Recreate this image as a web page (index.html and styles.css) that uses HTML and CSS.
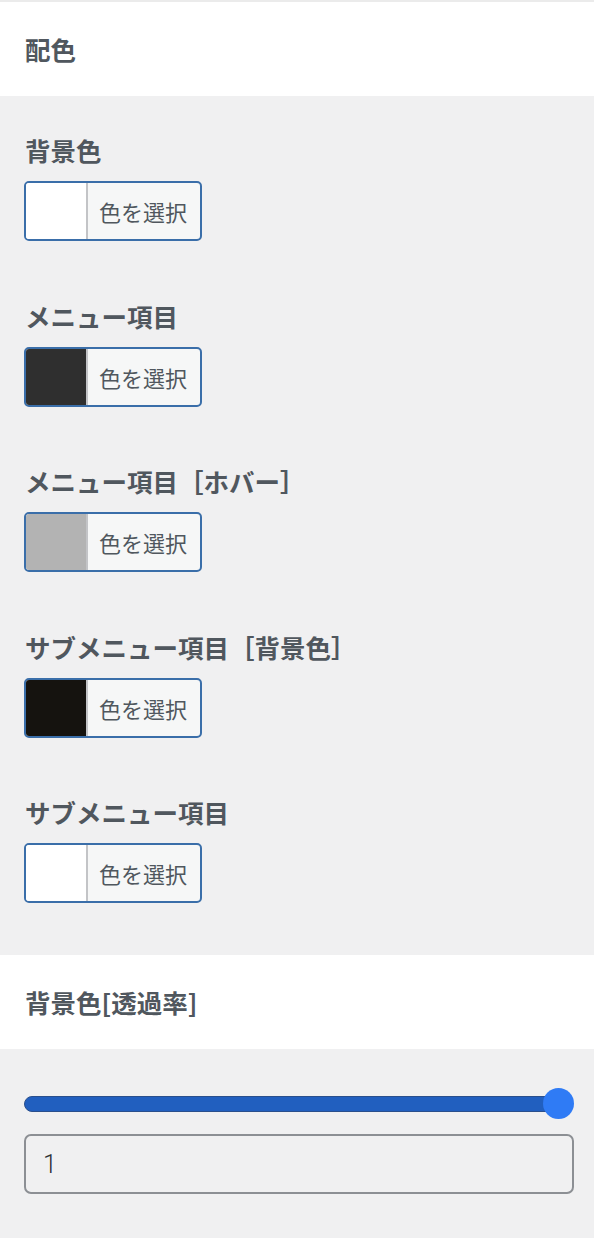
FILE: index.html
```html
<!DOCTYPE html>
<html lang="ja">
<head>
<meta charset="utf-8">
<link rel="stylesheet" href="styles.css">
</head>
<body>
<div class="page">
  <div class="strip"></div>
  <div class="section-head"><h2>配色</h2></div>
  <div class="section-body colors">
    <div class="control">
      <div class="label">背景色</div>
      <button class="picker"><span class="swatch" style="background:#ffffff"></span><span class="pick-text">色を選択</span></button>
    </div>
    <div class="control">
      <div class="label">メニュー項目</div>
      <button class="picker"><span class="swatch" style="background:#2f2f2f"></span><span class="pick-text">色を選択</span></button>
    </div>
    <div class="control">
      <div class="label">メニュー項目［ホバー］</div>
      <button class="picker"><span class="swatch" style="background:#b3b3b3"></span><span class="pick-text">色を選択</span></button>
    </div>
    <div class="control">
      <div class="label">サブメニュー項目［背景色］</div>
      <button class="picker"><span class="swatch" style="background:#15130f"></span><span class="pick-text">色を選択</span></button>
    </div>
    <div class="control">
      <div class="label">サブメニュー項目</div>
      <button class="picker"><span class="swatch" style="background:#ffffff"></span><span class="pick-text">色を選択</span></button>
    </div>
  </div>
  <div class="section-head"><h2>背景色[透過率]</h2></div>
  <div class="section-body opacity">
    <div class="slider">
      <div class="track"></div>
      <div class="thumb"></div>
    </div>
    <div class="number">1</div>
  </div>
</div>
</body>
</html>
```
FILE: styles.css
```css
* { box-sizing: border-box; }
html, body { margin: 0; padding: 0; }
body {
  background: #f0f0f1;
  font-family: "Noto Sans CJK JP", "Noto Sans", sans-serif;
  color: #50575e;
}
.page { width: 594px; min-height: 1238px; background: #f0f0f1; }
.strip { height: 2px; background: #ebebeb; }
.section-head {
  height: 94px;
  background: #fff;
  display: flex;
  align-items: center;
  padding-left: 25px;
}
.section-head h2 {
  margin: 0;
  font-size: 25.5px;
  line-height: 30px;
  font-weight: 700;
  color: #50575e;
}
.section-body { background: #f0f0f1; padding: 0 20px 0 24px; }
.colors {
  padding-top: 39px;
  padding-bottom: 52px;
  display: flex;
  flex-direction: column;
  gap: 59.5px;
}
.control { display: flex; flex-direction: column; align-items: flex-start; }
.label {
  font-size: 25.5px;
  line-height: 30px;
  font-weight: 700;
  color: #50575e;
  margin-bottom: 16px;
  padding-left: 1px;
}
.picker {
  display: flex;
  width: 178px;
  height: 60px;
  padding: 0;
  margin: 0;
  border: 2px solid #3a6ea9;
  border-radius: 5px;
  overflow: hidden;
  background: #f6f7f7;
  font-family: inherit;
}
.swatch {
  height: 100%;
  border-right: 2px solid #c3c4c7;
  flex: 0 0 62px;
}
.pick-text {
  flex: 1;
  display: flex;
  align-items: center;
  justify-content: center;
  font-size: 22px;
  font-weight: 400;
  color: #50575e;
  padding-right: 2px;
}
.opacity { padding-top: 39px; padding-bottom: 44px; }
.slider { position: relative; height: 31px; width: 550px; }
.track {
  position: absolute;
  left: 0; right: 4px; top: 8px;
  height: 16px;
  background: #215fbf;
  border: 1px solid #2a4f8c;
  border-radius: 8px;
}
.thumb {
  position: absolute;
  right: 0; top: 0;
  width: 31px; height: 31px;
  border-radius: 50%;
  background: #2f7bf5;
}
.number {
  margin-top: 15px;
  width: 550px;
  height: 60px;
  border: 2px solid #8c8f94;
  border-radius: 7px;
  background: #f0f0f1;
  font-family: "Roboto", sans-serif;
  font-weight: 300;
  font-size: 25px;
  color: #2c3338;
  display: flex;
  align-items: center;
  padding-left: 17px;
}
```
